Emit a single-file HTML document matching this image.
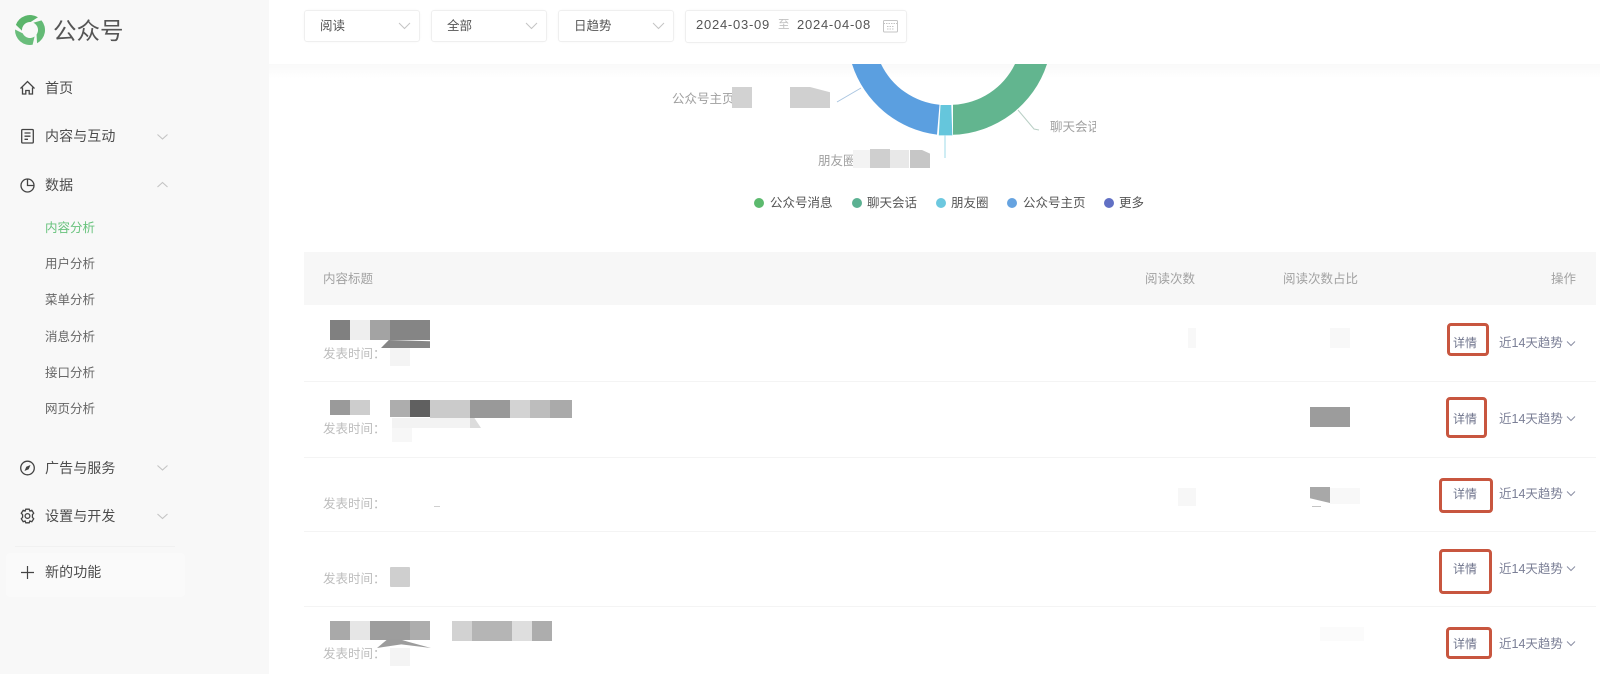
<!DOCTYPE html>
<html lang="zh">
<head>
<meta charset="utf-8">
<title>公众号</title>
<style>
html,body{margin:0;padding:0;width:1600px;height:674px;overflow:hidden;background:#fff;}
body{position:relative;font-family:"Liberation Sans","Noto Sans CJK SC",sans-serif;color:#555;}
body>*{filter:blur(.35px);}
.t{position:absolute;white-space:nowrap;line-height:20px;height:20px;}
.b{position:absolute;}
#side{position:absolute;left:0;top:0;width:269px;height:674px;background:#f8f8f8;}
.m{font-size:14px;color:#4d4d4d;left:45px;letter-spacing:.1px;}
.s{font-size:12.5px;color:#666;left:45px;}
.sel{position:absolute;top:10px;height:32px;background:#fff;border:1px solid #efefef;border-radius:3px;box-sizing:border-box;box-shadow:0 0 2px rgba(0,0,0,.03);}
.sel span{position:absolute;left:15px;top:5px;font-size:12.5px;line-height:20px;color:#555;}
.g{position:absolute;left:0;top:0;}
.hd{font-size:12.5px;color:#a2a2a2;top:269px;}
.tm{font-size:12.5px;color:#bdbdbd;left:323px;}
.xq{font-size:12px;color:#6f748c;left:1453px;}
.tr{font-size:12.5px;color:#7b7f96;left:1499px;}
.box{position:absolute;border:3px solid #c8563f;border-radius:4px;box-sizing:border-box;}
.ln{position:absolute;left:304px;width:1292px;height:1px;background:#f4f4f4;}
.lg{font-size:12.5px;color:#555;top:193px;}
.d{position:absolute;top:198px;width:10px;height:10px;border-radius:50%;}
.lb{font-size:12.5px;color:#a0a0a0;}
</style>
</head>
<body>

<div id="side"></div>

<!-- top bar -->
<div class="b" style="left:269px;top:0;width:1331px;height:64px;background:#fff;"></div>
<div class="b" style="left:269px;top:64px;width:1331px;height:14px;background:linear-gradient(#f9f9f9,#fff);"></div>

<!-- donut -->
<svg class="g" width="1600" height="674" style="clip-path:inset(64px 0 0 0);">
  <path d="M953 134.800A102.400 102.400 0 0 0 1047 64L1015 64A72.400 72.400 0 0 1 953 104.800Z" fill="#62b58f"/>
  <path d="M937 134.600A102.400 102.400 0 0 1 852 64L881 64A72.400 72.400 0 0 0 939.500 104.700Z" fill="#5b9fe0"/>
  <path d="M938.800 135.400L952.300 135.400L951.300 105L940.500 105Z" fill="#65c6dc"/>
</svg>
<svg class="g" width="1600" height="674" fill="none">
  <path d="M837 102L861 88" stroke="#a9c5e0" stroke-width="1"/>
  <path d="M1018 110L1034 129L1039 130" stroke="#b9cfc5" stroke-width="1"/>
  <path d="M945 135L945 158" stroke="#9fdbe8" stroke-width="1"/>
</svg>
<div class="t lb" style="left:672px;top:89px;">公众号主页</div>
<div class="b" style="left:732px;top:87px;width:20px;height:21px;background:#d2d2d2;"></div>
<div class="b" style="left:752px;top:84px;width:38px;height:27px;background:#fff;"></div>
<div class="b" style="left:790px;top:87px;width:40px;height:21px;background:#d0d0d0;clip-path:polygon(0 0,50% 0,100% 25%,100% 100%,0 100%);"></div>
<div class="t lb" style="left:1050px;top:117px;width:46px;overflow:hidden;">聊天会话</div>
<div class="t lb" style="left:818px;top:151px;">朋友圈</div>
<div class="b" style="left:853px;top:150px;width:17px;height:18px;background:#f3f3f3;"></div>
<div class="b" style="left:870px;top:149px;width:20px;height:19px;background:#cfcfcf;"></div>
<div class="b" style="left:890px;top:150px;width:19px;height:18px;background:#e8e8e8;"></div>
<div class="b" style="left:910px;top:150px;width:20px;height:18px;background:#c6c6c6;clip-path:polygon(0 0,60% 0,100% 20%,100% 100%,0 100%);"></div>

<!-- legend -->
<div class="d" style="left:754px;background:#5cba6e;"></div><div class="t lg" style="left:770px;">公众号消息</div>
<div class="d" style="left:852px;background:#5bb192;"></div><div class="t lg" style="left:867px;">聊天会话</div>
<div class="d" style="left:936px;background:#6cc8df;"></div><div class="t lg" style="left:951px;">朋友圈</div>
<div class="d" style="left:1007px;background:#66a3e0;"></div><div class="t lg" style="left:1023px;">公众号主页</div>
<div class="d" style="left:1104px;background:#6170c4;"></div><div class="t lg" style="left:1119px;">更多</div>

<!-- logo -->
<svg class="g" width="60" height="60">
  <path d="M15.900 24.870A15 15 0 0 1 37.950 17.280L30.700 22.030A8 8 0 0 0 22.030 30.700Z" fill="#5bb56b"/>
  <path transform="rotate(120 30 30)" d="M15.900 24.870A15 15 0 0 1 37.950 17.280L30.700 22.030A8 8 0 0 0 22.030 30.700Z" fill="#63ba75"/>
  <path transform="rotate(240 30 30)" d="M15.900 24.870A15 15 0 0 1 37.950 17.280L30.700 22.030A8 8 0 0 0 22.030 30.700Z" fill="#69bd7b"/>
</svg>
<div class="t" style="left:53px;top:18px;font-size:23.500px;line-height:26px;height:26px;color:#555;">公众号</div>

<!-- sidebar icons -->
<svg class="g" width="60" height="600" fill="none" stroke="#444" stroke-width="1.300">
  <path d="M20.500 88.500L27.500 81.500L34.500 88.500M22.500 87.500V94H25.800V90.500H29.200V94H32.500V87.500"/>
  <rect x="21.700" y="129.500" width="11.600" height="13.500" rx="1"/>
  <path d="M24.500 133H30.500M24.500 136.200H30.500M24.500 139.300H28"/>
  <circle cx="27.500" cy="185.500" r="6.500"/>
  <path d="M27.500 179V185.500H34"/>
  <circle cx="27.500" cy="468" r="6.800"/>
  <path d="M30.500 465L28.700 469.200L24.500 471L26.300 466.800Z" fill="#444" stroke="none"/>
  <circle cx="27.500" cy="516" r="2.400"/>
  <path d="M25.800 509.200H29.200L29.900 511L31.800 510.300L33.700 513.200L32.400 514.700V517.300L33.700 518.800L31.800 521.700L29.900 521L29.200 522.800H25.800L25.100 521L23.200 521.700L21.300 518.800L22.600 517.300V514.700L21.300 513.200L23.200 510.300L25.100 511Z"/>
</svg>
<!-- sidebar chevrons -->
<svg class="g" width="180" height="540" fill="none" stroke="#c4c4c4" stroke-width="1.100">
  <path d="M157.500 134.500L162.500 139L167.500 134.500"/>
  <path d="M157.500 187L162.500 182.500L167.500 187"/>
  <path d="M157.500 465.500L162.500 470L167.500 465.500"/>
  <path d="M157.500 514L162.500 518.500L167.500 514"/>
</svg>

<div class="t m" style="top:78px;">首页</div>
<div class="t m" style="top:126px;">内容与互动</div>
<div class="t m" style="top:175px;">数据</div>
<div class="t s" style="top:218px;color:#67c27c;">内容分析</div>
<div class="t s" style="top:254px;">用户分析</div>
<div class="t s" style="top:290px;">菜单分析</div>
<div class="t s" style="top:327px;">消息分析</div>
<div class="t s" style="top:363px;">接口分析</div>
<div class="t s" style="top:399px;">网页分析</div>
<div class="t m" style="top:458px;">广告与服务</div>
<div class="t m" style="top:506px;">设置与开发</div>
<div class="b" style="left:15px;top:546px;width:160px;height:1px;background:#f1f1f1;"></div>
<div class="b" style="left:6px;top:553px;width:179px;height:44px;background:#fafafa;border-radius:4px;"></div>
<div class="t m" style="top:562px;">新的功能</div>
<svg class="g" width="60" height="600" fill="none" stroke="#444" stroke-width="1.200"><path d="M21 572.500H34M27.500 566V579"/></svg>

<!-- filters -->
<div class="sel" style="left:304px;width:116px;"><span>阅读</span></div>
<div class="sel" style="left:431px;width:116px;"><span>全部</span></div>
<div class="sel" style="left:558px;width:116px;"><span>日趋势</span></div>
<div class="sel" style="left:685px;width:222px;height:33px;"></div>
<div class="t" style="left:696px;top:15px;font-size:13px;color:#555;letter-spacing:.75px;">2024-03-09</div>
<div class="t" style="left:778px;top:15px;font-size:11.500px;color:#c2c2c2;">至</div>
<div class="t" style="left:797px;top:15px;font-size:13px;color:#555;letter-spacing:.75px;">2024-04-08</div>
<svg class="g" width="920" height="50" fill="none" stroke="#c4c4c4" stroke-width="1">
  <path d="M399 23L404.500 28.500L410 23M526 23L531.500 28.500L537 23M653 23L658.500 28.500L664 23"/>
  <rect x="883.500" y="20.500" width="14" height="11.500" rx="1"/>
  <path d="M883.500 23.500H897.500M887 26.500H894M887 29H894" stroke-dasharray="1.500 1"/>
</svg>

<!-- table header -->
<div class="b" style="left:304px;top:252px;width:1292px;height:53px;background:#f7f7f7;"></div>
<div class="t hd" style="left:323px;">内容标题</div>
<div class="t hd" style="left:1145px;">阅读次数</div>
<div class="t hd" style="left:1283px;">阅读次数占比</div>
<div class="t hd" style="left:1551px;">操作</div>

<!-- row lines -->
<div class="ln" style="top:381px;"></div>
<div class="ln" style="top:457px;"></div>
<div class="ln" style="top:531px;"></div>
<div class="ln" style="top:606px;"></div>

<!-- row 1 mosaics -->
<div class="b" style="left:330px;top:320px;width:20px;height:20px;background:#808080;"></div>
<div class="b" style="left:350px;top:320px;width:20px;height:20px;background:#eeeeee;"></div>
<div class="b" style="left:370px;top:320px;width:20px;height:20px;background:#a3a3a3;"></div>
<div class="b" style="left:390px;top:320px;width:40px;height:20px;background:#858585;"></div>
<div class="b" style="left:381px;top:340px;width:49px;height:8px;background:#868686;clip-path:polygon(16% 0,100% 15%,100% 100%,0 100%);"></div>
<div class="b" style="left:390px;top:348px;width:20px;height:18px;background:#f4f4f4;"></div>
<div class="b" style="left:1188px;top:328px;width:8px;height:20px;background:#f8f8f8;"></div>
<div class="b" style="left:1330px;top:328px;width:20px;height:20px;background:#f8f8f8;"></div>

<!-- row 2 mosaics -->
<div class="b" style="left:330px;top:400px;width:20px;height:15px;background:#9a9a9a;"></div>
<div class="b" style="left:350px;top:400px;width:20px;height:15px;background:#cdcdcd;"></div>
<div class="b" style="left:390px;top:400px;width:20px;height:17px;background:#adadad;"></div>
<div class="b" style="left:410px;top:400px;width:20px;height:17px;background:#606060;"></div>
<div class="b" style="left:430px;top:400px;width:40px;height:18px;background:#cbcbcb;"></div>
<div class="b" style="left:470px;top:400px;width:40px;height:18px;background:#999999;"></div>
<div class="b" style="left:510px;top:400px;width:20px;height:18px;background:#d3d3d3;"></div>
<div class="b" style="left:530px;top:400px;width:20px;height:18px;background:#bdbdbd;"></div>
<div class="b" style="left:550px;top:400px;width:22px;height:18px;background:#aaaaaa;"></div>
<div class="b" style="left:392px;top:418px;width:78px;height:10px;background:#f3f3f3;"></div>
<div class="b" style="left:470px;top:418px;width:11px;height:10px;background:#dcdcdc;clip-path:polygon(0 0,40% 0,100% 100%,0 100%);"></div>
<div class="b" style="left:392px;top:428px;width:20px;height:14px;background:#f7f7f7;"></div>
<div class="b" style="left:1310px;top:407px;width:40px;height:20px;background:#9c9c9c;"></div>

<!-- row 3 mosaics -->
<div class="b" style="left:1310px;top:487px;width:20px;height:16px;background:#a8a8a8;clip-path:polygon(0 0,100% 0,100% 100%,0 70%);"></div>
<div class="b" style="left:1312px;top:506px;width:9px;height:1px;background:#c4c4c4;"></div>
<div class="b" style="left:1330px;top:488px;width:30px;height:16px;background:#f8f8f8;"></div>
<div class="b" style="left:1178px;top:488px;width:18px;height:18px;background:#f7f7f7;"></div>
<div class="b" style="left:434px;top:506px;width:6px;height:1px;background:#cfcfcf;"></div>

<!-- row 4 mosaic -->
<div class="b" style="left:390px;top:567px;width:20px;height:20px;background:#cfcfcf;border-radius:1px;"></div>

<!-- row 5 mosaics -->
<div class="b" style="left:330px;top:621px;width:20px;height:19px;background:#a9a9a9;"></div>
<div class="b" style="left:350px;top:621px;width:20px;height:19px;background:#e6e6e6;"></div>
<div class="b" style="left:370px;top:621px;width:40px;height:19px;background:#9d9d9d;"></div>
<div class="b" style="left:410px;top:621px;width:20px;height:19px;background:#adadad;"></div>
<div class="b" style="left:377px;top:639px;width:54px;height:9px;background:#9c9c9c;clip-path:polygon(20% 0,40% 0,60% 35%,100% 100%,45% 60%,0 100%);"></div>
<div class="b" style="left:390px;top:648px;width:20px;height:18px;background:#f4f4f4;"></div>
<div class="b" style="left:452px;top:621px;width:20px;height:20px;background:#d2d2d2;"></div>
<div class="b" style="left:472px;top:621px;width:40px;height:20px;background:#b5b5b5;"></div>
<div class="b" style="left:512px;top:621px;width:20px;height:20px;background:#dedede;"></div>
<div class="b" style="left:532px;top:621px;width:20px;height:20px;background:#adadad;"></div>
<div class="b" style="left:1320px;top:627px;width:44px;height:14px;background:#fbfbfb;"></div>

<!-- publish time -->
<div class="t tm" style="top:344px;">发表时间：</div>
<div class="t tm" style="top:419px;">发表时间：</div>
<div class="t tm" style="top:494px;">发表时间：</div>
<div class="t tm" style="top:569px;">发表时间：</div>
<div class="t tm" style="top:644px;">发表时间：</div>

<!-- actions -->
<div class="box" style="left:1447px;top:323px;width:42px;height:33px;"></div>
<div class="box" style="left:1446px;top:397px;width:41px;height:41px;"></div>
<div class="box" style="left:1439px;top:478px;width:54px;height:35px;"></div>
<div class="box" style="left:1439px;top:549px;width:53px;height:45px;"></div>
<div class="box" style="left:1446px;top:627px;width:46px;height:32px;"></div>

<div class="t xq" style="top:333px;">详情</div>
<div class="t xq" style="top:409px;">详情</div>
<div class="t xq" style="top:484px;">详情</div>
<div class="t xq" style="top:559px;">详情</div>
<div class="t xq" style="top:634px;">详情</div>

<div class="t tr" style="top:333px;">近14天趋势</div>
<div class="t tr" style="top:409px;">近14天趋势</div>
<div class="t tr" style="top:484px;">近14天趋势</div>
<div class="t tr" style="top:559px;">近14天趋势</div>
<div class="t tr" style="top:634px;">近14天趋势</div>

<svg class="g" width="1600" height="674" fill="none" stroke="#8a8ea3" stroke-width="1">
  <path d="M1567 341.500L1571 345.500L1575 341.500"/>
  <path d="M1567 416.500L1571 420.500L1575 416.500"/>
  <path d="M1567 491.500L1571 495.500L1575 491.500"/>
  <path d="M1567 566.500L1571 570.500L1575 566.500"/>
  <path d="M1567 641.500L1571 645.500L1575 641.500"/>
</svg>

</body>
</html>
